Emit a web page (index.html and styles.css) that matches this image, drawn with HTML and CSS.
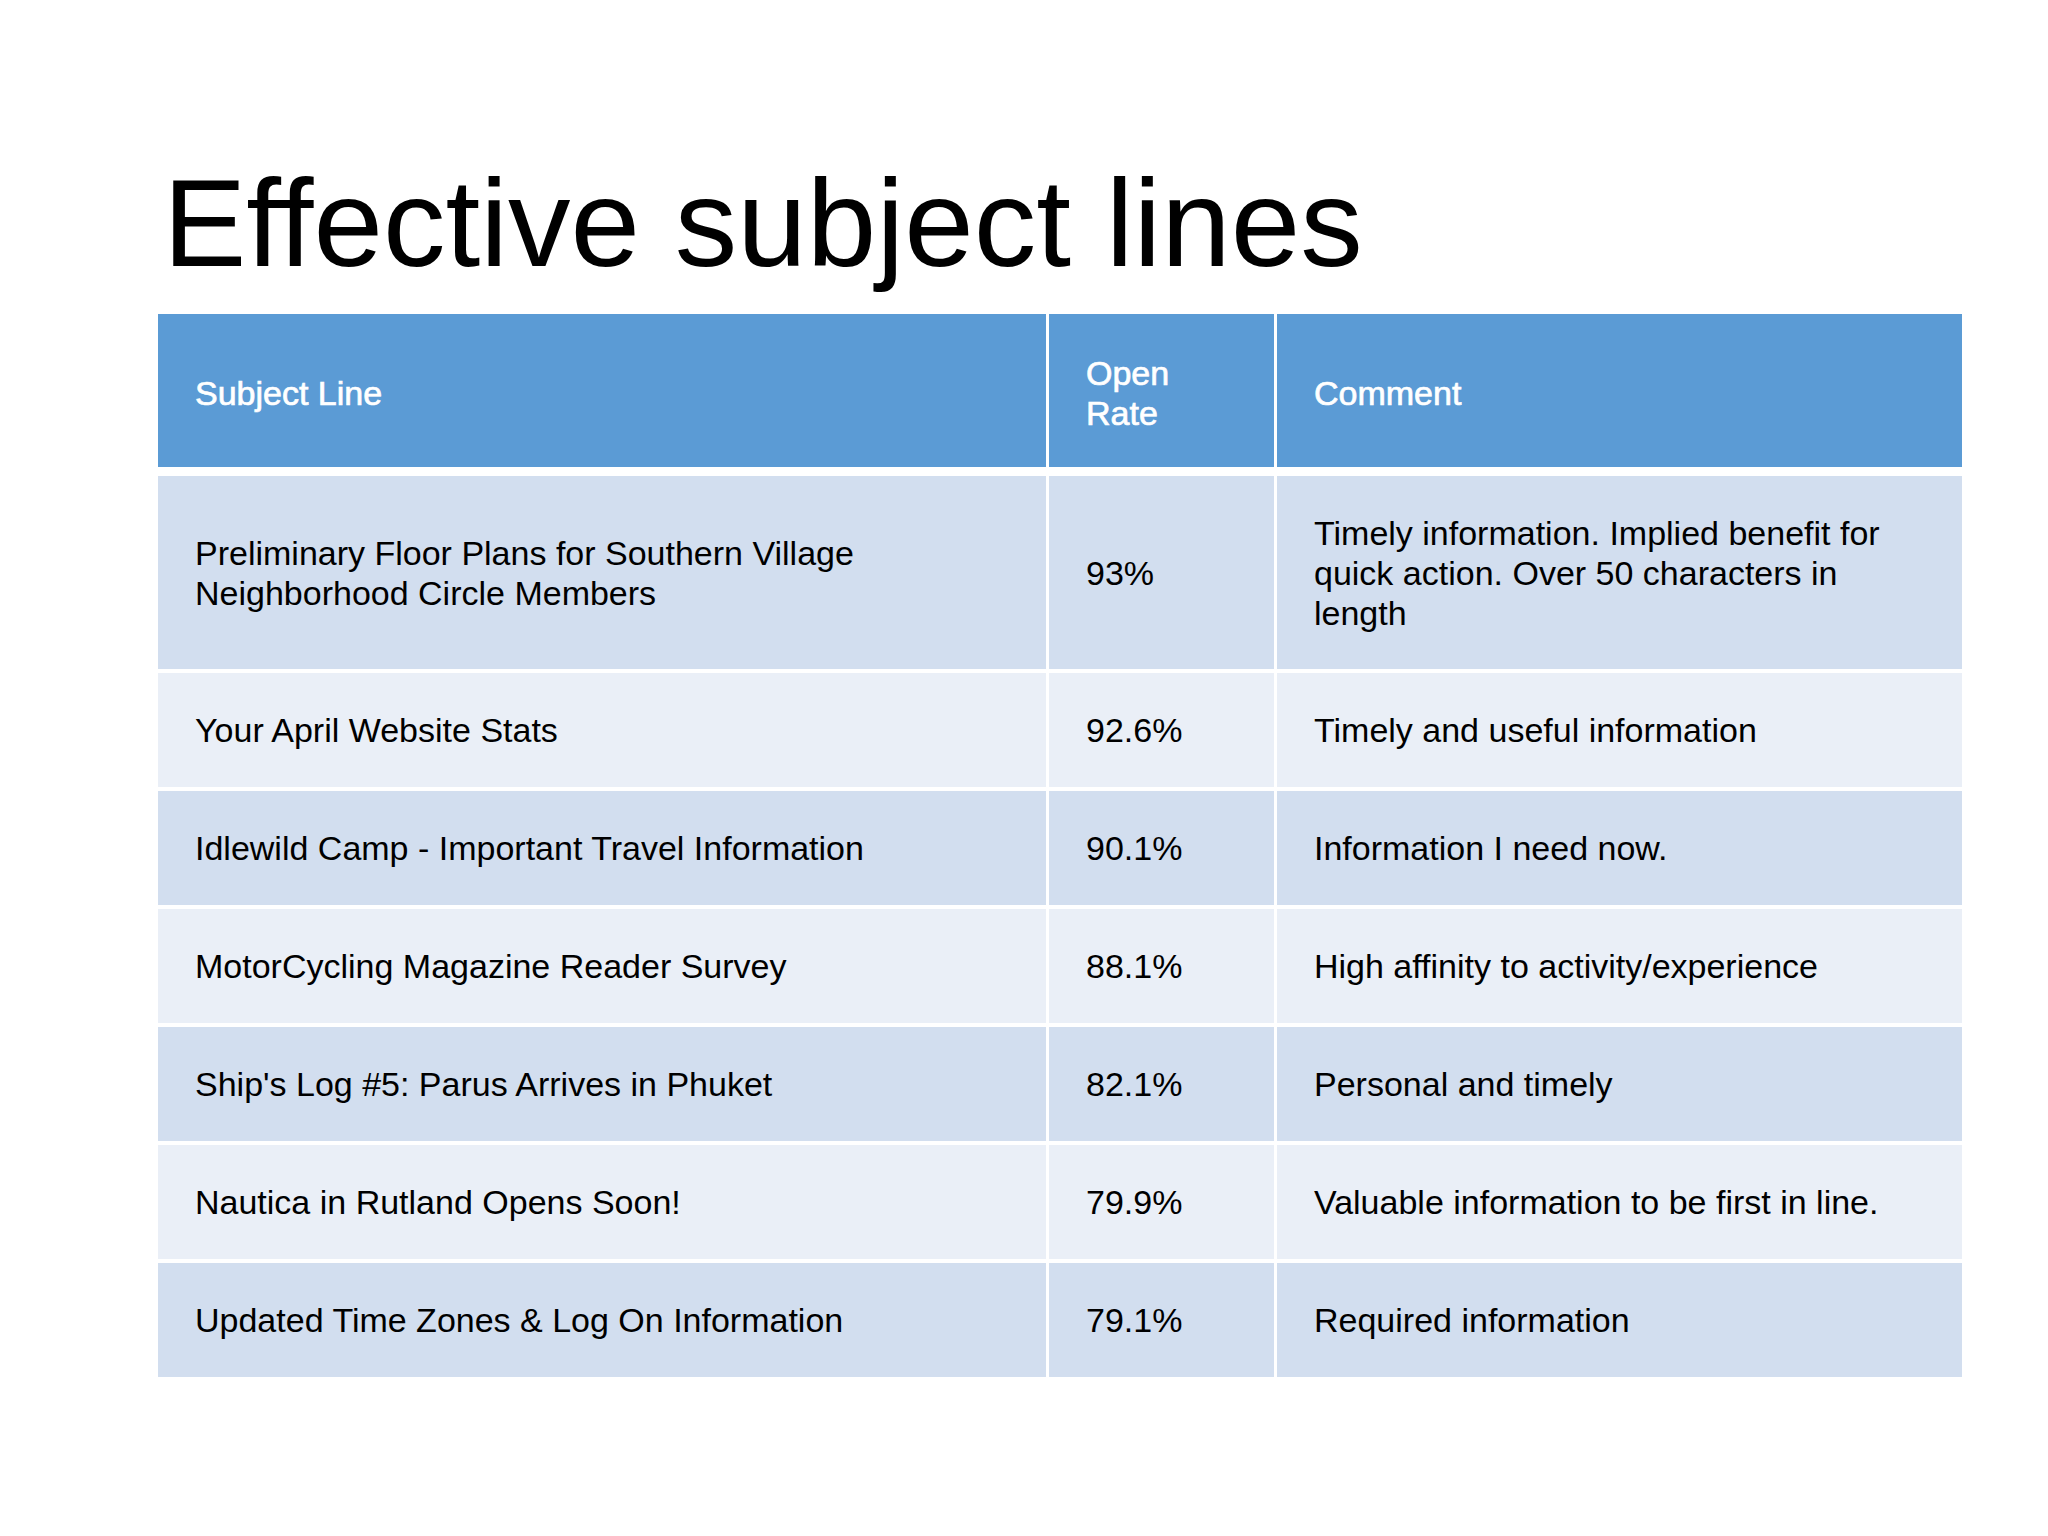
FILE: index.html
```html
<!DOCTYPE html>
<html lang="en">
<head>
<meta charset="utf-8">
<title>Effective subject lines</title>
<link rel="stylesheet" href="styles.css">
</head>
<body>
<main class="slide">
  <h1 class="title">Effective subject lines</h1>
  <div class="table" role="table">
    <div class="row head" role="row">
      <div class="cell" role="columnheader">Subject Line</div>
      <div class="cell" role="columnheader">Open<br>Rate</div>
      <div class="cell" role="columnheader">Comment</div>
    </div>
    <div class="row odd tall" role="row">
      <div class="cell" role="cell">Preliminary Floor Plans for Southern Village Neighborhood Circle Members</div>
      <div class="cell" role="cell">93%</div>
      <div class="cell" role="cell">Timely information. Implied benefit for quick action. Over 50 characters in length</div>
    </div>
    <div class="row even" role="row">
      <div class="cell" role="cell">Your April Website Stats</div>
      <div class="cell" role="cell">92.6%</div>
      <div class="cell" role="cell">Timely and useful information</div>
    </div>
    <div class="row odd" role="row">
      <div class="cell" role="cell">Idlewild Camp - Important Travel Information</div>
      <div class="cell" role="cell">90.1%</div>
      <div class="cell" role="cell">Information I need now.</div>
    </div>
    <div class="row even" role="row">
      <div class="cell" role="cell">MotorCycling Magazine Reader Survey</div>
      <div class="cell" role="cell">88.1%</div>
      <div class="cell" role="cell">High affinity to activity/experience</div>
    </div>
    <div class="row odd" role="row">
      <div class="cell" role="cell">Ship's Log #5: Parus Arrives in Phuket</div>
      <div class="cell" role="cell">82.1%</div>
      <div class="cell" role="cell">Personal and timely</div>
    </div>
    <div class="row even" role="row">
      <div class="cell" role="cell">Nautica in Rutland Opens Soon!</div>
      <div class="cell" role="cell">79.9%</div>
      <div class="cell" role="cell">Valuable information to be first in line.</div>
    </div>
    <div class="row odd" role="row">
      <div class="cell" role="cell">Updated Time Zones &amp; Log On Information</div>
      <div class="cell" role="cell">79.1%</div>
      <div class="cell" role="cell">Required information</div>
    </div>
  </div>
</main>
</body>
</html>
```

FILE: styles.css
```css
html, body {
  margin: 0;
  padding: 0;
  background: #ffffff;
}

body {
  font-family: "Liberation Sans", Arial, sans-serif;
  color: #000000;
}

.slide {
  width: 2048px;
  height: 1536px;
  box-sizing: border-box;
  padding: 160px 0 0 158px;
  display: flex;
  flex-direction: column;
}

.title {
  margin: 0 0 29px 5px;
  font-size: 125px;
  line-height: 1;
  font-weight: normal;
  color: #000000;
}

.table {
  display: flex;
  flex-direction: column;
  gap: 4px;
  width: 1804px;
}

.row {
  display: grid;
  grid-template-columns: 888px 225px 685px;
  column-gap: 3px;
  height: 114px;
}

.row.head {
  height: 153px;
  margin-bottom: 5px;
}

.row.tall {
  height: 193px;
}

.cell {
  display: flex;
  align-items: center;
  box-sizing: border-box;
  padding: 0 36px 0 37px;
  font-size: 34px;
  line-height: 40px;
}

.head .cell {
  background: #5b9bd5;
  color: #ffffff;
  padding-top: 4px;
  -webkit-text-stroke: 0.7px #ffffff;
}

.odd .cell {
  background: #d2deef;
}

.even .cell {
  background: #eaeff7;
}
```
